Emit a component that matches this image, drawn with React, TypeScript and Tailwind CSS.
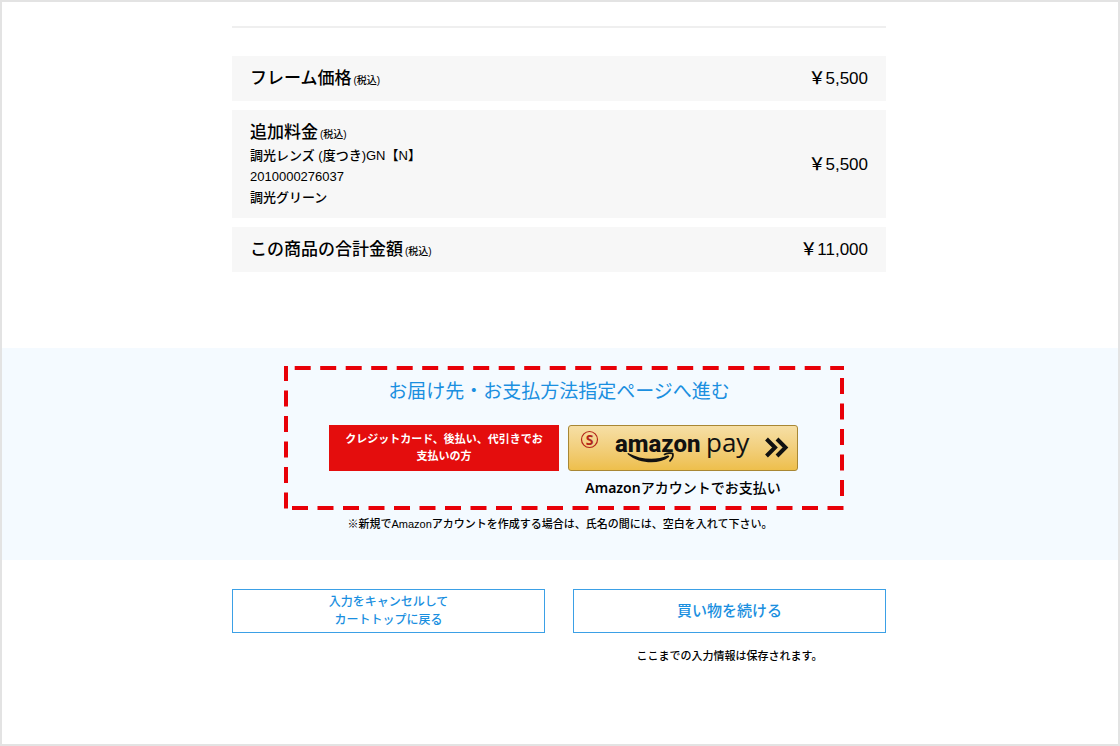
import type { ReactNode } from "react";

function Tax() {
  return <span className="ml-0.5 text-[10px] leading-none">(税込)</span>;
}

function PriceRow({
  label,
  price,
  details = [],
}: {
  label: string;
  price: string;
  details?: string[];
}) {
  return (
    <div className="flex items-center justify-between bg-[#f7f7f7] px-[18px] py-2.5">
      <dt className="text-[17px] font-medium">
        <div className="h-[25px] leading-[25px]">
          {label}
          <Tax />
        </div>
        {details.map((line) => (
          <div key={line} className="h-[21px] text-[13px] leading-[21px]">
            {line}
          </div>
        ))}
      </dt>
      <dd className="h-[25px] text-[17px] leading-[25px] font-medium">{price}</dd>
    </div>
  );
}

function AmazonPayLogo() {
  return (
    <svg viewBox="0 0 230 46" className="h-[46px] w-[230px] shrink-0" aria-hidden="true">
      <circle cx="21.5" cy="14.5" r="8" fill="none" stroke="#b3261a" strokeWidth="1.2" />
      <text
        x="21.5"
        y="19.5"
        textAnchor="middle"
        fontFamily="Noto Sans, sans-serif"
        fontSize="14"
        fontWeight="700"
        fill="#b3261a"
      >
        S
      </text>
      <text x="47" y="27" fontFamily="Roboto, sans-serif" fontSize="24" fontWeight="800" fill="#111">
        amazon
      </text>
      <text x="138" y="27" fontFamily="Open Sans, sans-serif" fontSize="26" fill="#111">
        pay
      </text>
      <path
        d="M60.6 28.200C72 34.200 87 36 99.500 30.600c1.500-.6 2.300.6 1.200 1.600C91 39.800 71 38.800 60 29.400c-.8-.8-.4-1.600.6-1.200z"
        fill="#111"
      />
      <path
        d="M96.500 29.400c2.500-1.500 6.500-1.700 8.200-.9.6 1.800-.5 5.200-2.700 7.300"
        fill="none"
        stroke="#111"
        strokeWidth="1.8"
        strokeLinecap="round"
        strokeLinejoin="round"
      />
      <path
        d="M198.5 14l8.5 8.5-8.5 8.5M209 14l8.5 8.5-8.5 8.5"
        fill="none"
        stroke="#111"
        strokeWidth="4"
      />
    </svg>
  );
}

function DashedFrame({ children }: { children: ReactNode }) {
  return (
    <div className="relative w-[560px] pt-3 pb-3">
      <svg
        viewBox="0 0 560 144"
        preserveAspectRatio="none"
        className="pointer-events-none absolute inset-0 h-full w-full"
        aria-hidden="true"
      >
        <g stroke="#e80008" strokeWidth="4" strokeDasharray="16 9.5">
          <path d="M10.7 2H560" />
          <path d="M8 142H560" />
          <path d="M2 -1V144" />
          <path d="M558 12V130" />
        </g>
      </svg>
      {children}
    </div>
  );
}

export default function App() {
  return (
    <main className="min-h-screen border-2 border-[#e3e3e3] bg-white font-['Liberation_Sans','Noto_Sans_CJK_JP',sans-serif] text-black">
      <div className="mx-auto max-w-[656px] pt-6 pr-0.5">
        <hr className="border-t-2 border-[#efefef]" />
        <dl className="mt-7 flex flex-col gap-[9px]">
          <PriceRow label="フレーム価格" price="￥5,500" />
          <PriceRow
            label="追加料金"
            price="￥5,500"
            details={["調光レンズ (度つき)GN【N】", "2010000276037", "調光グリーン"]}
          />
          <PriceRow label="この商品の合計金額" price="￥11,000" />
        </dl>
      </div>

      <section className="mt-19 bg-[#f4faff] pt-[18px] pb-7">
        <div className="flex justify-center pl-2">
          <DashedFrame>
            <h2 className="pr-2.5 text-center text-[19px] leading-7 text-[#1a8fe0]">
              お届け先・お支払方法指定ページへ進む
            </h2>
            <div className="mt-[19px] flex items-start justify-center gap-[9px] pr-px">
              <button
                type="button"
                className="h-[46px] w-[230px] bg-[#e40d0d] text-[11px] leading-[17px] font-bold text-white"
              >
                クレジットカード、後払い、代引きでお
                <br />
                支払いの方
              </button>
              <div className="w-[230px]">
                <button
                  type="button"
                  aria-label="amazon pay"
                  aria-describedby="amazon-note"
                  className="flex h-[46px] w-full items-center justify-center rounded-[3px] border border-[#a88734] bg-linear-to-b from-[#f6dfa5] to-[#eebf4b]"
                >
                  <AmazonPayLogo />
                </button>
                <p
                  id="amazon-note"
                  className="mt-[7px] h-5 text-center font-['Noto_Sans','Noto_Sans_CJK_JP',sans-serif] text-[14px] leading-5 font-semibold"
                >
                  Amazon<span className="font-medium">アカウントでお支払い</span>
                </p>
              </div>
            </div>
          </DashedFrame>
        </div>
        <p className="mt-1.5 h-4 text-center text-[11px] leading-4 font-medium">
          ※新規でAmazonアカウントを作成する場合は、氏名の間には、空白を入れて下さい。
        </p>
      </section>

      <div className="mx-auto grid max-w-[656px] grid-cols-2 items-start gap-7 pt-[29px] pr-0.5 pb-16">
        <button
          type="button"
          className="h-11 border border-[#3ba0e6] bg-white text-[12px] leading-[18px] font-medium text-[#1a8fe0]"
        >
          入力をキャンセルして
          <br />
          カートトップに戻る
        </button>
        <div>
          <button
            type="button"
            className="h-11 w-full border border-[#3ba0e6] bg-white text-[15px] font-medium text-[#1a8fe0]"
          >
            買い物を続ける
          </button>
          <p className="mt-[15px] text-center text-[11px] leading-4 font-medium">
            ここまでの入力情報は保存されます。
          </p>
        </div>
      </div>
    </main>
  );
}
